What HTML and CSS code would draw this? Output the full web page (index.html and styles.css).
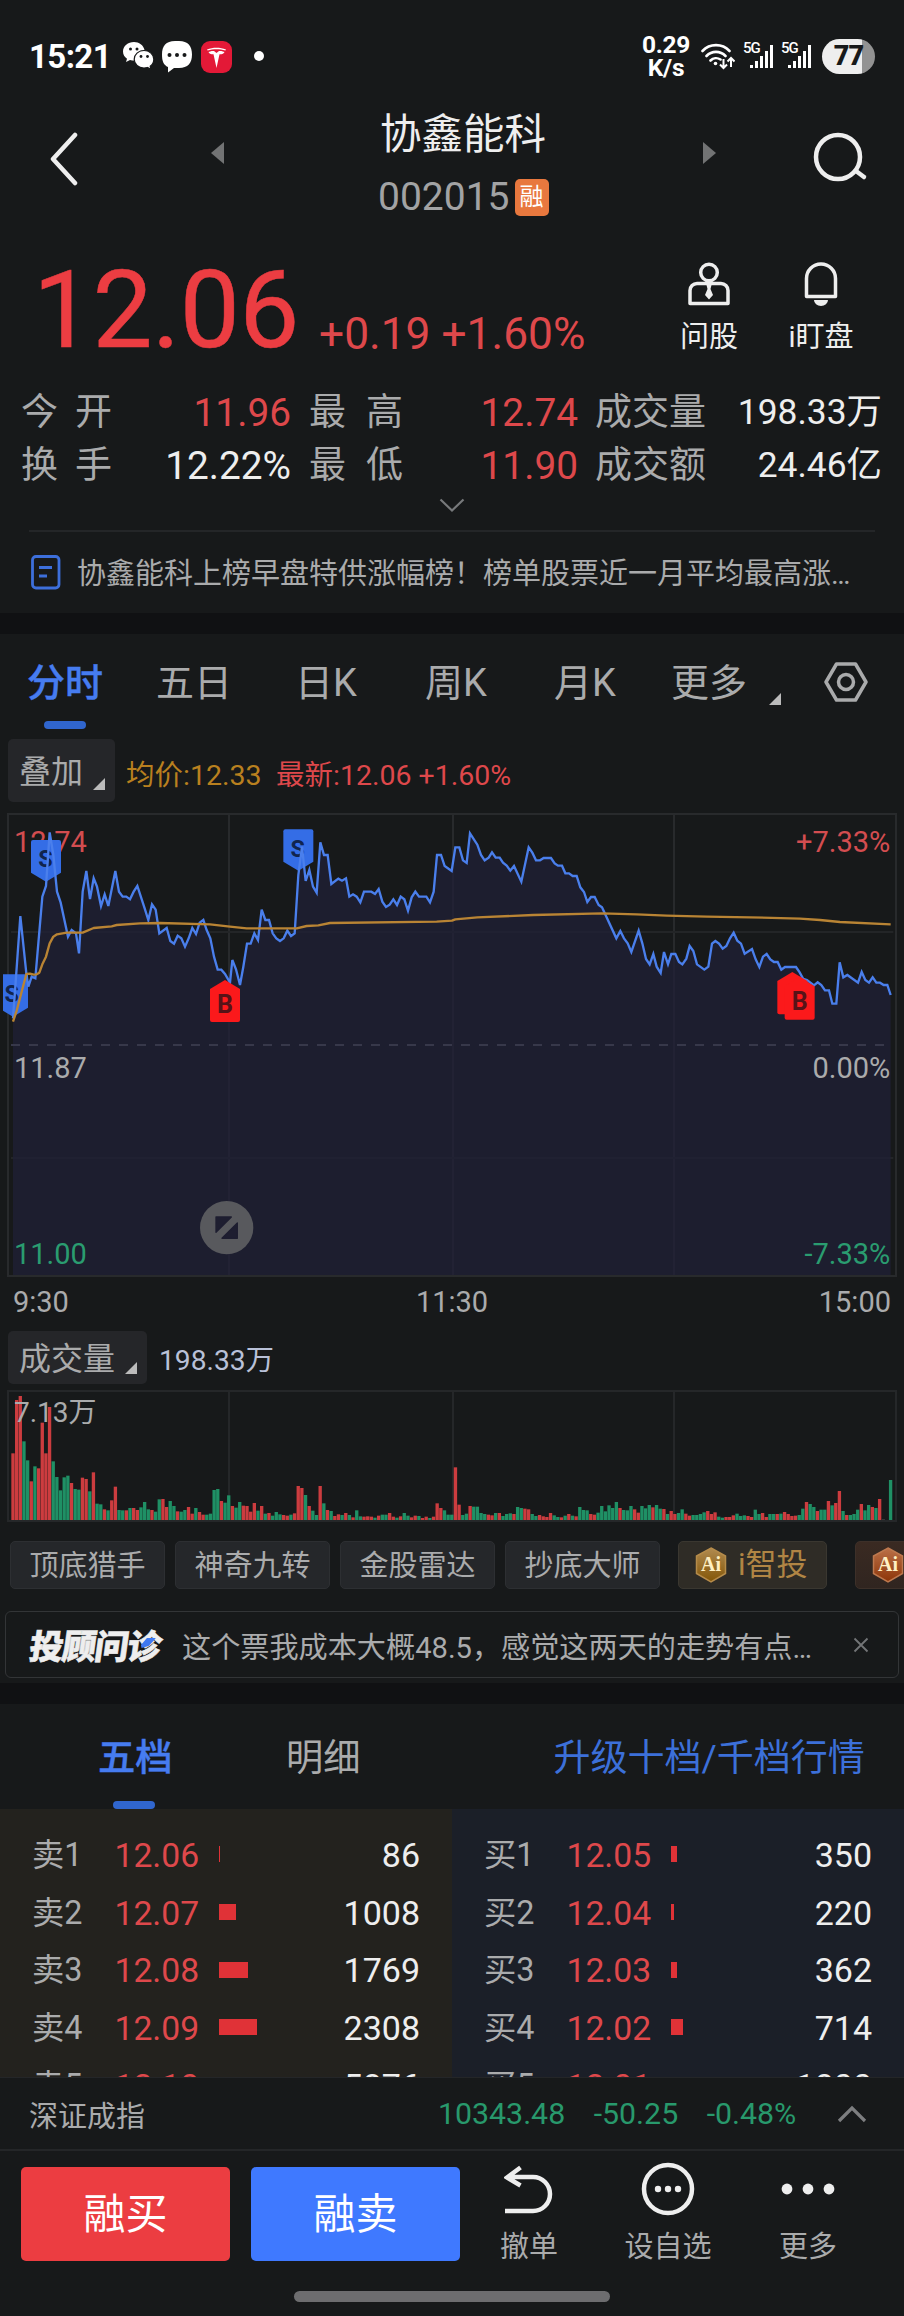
FILE: index.html
```html
<!DOCTYPE html>
<html lang="zh-CN">
<head>
<meta charset="utf-8">
<title>协鑫能科 002015</title>
<link rel="stylesheet" href="styles.css">
</head>
<body>
<div class="status">
  <span class="clock">15:21</span>
  <svg class="wechat" width="32" height="28" viewBox="0 0 32 28"><path fill="#fff" d="M11 0C5 0 0 4 0 9.500c0 3 1.600 5.600 4 7.300L3 20l4-2c1.500.4 3 .6 4 .6 0-6 5-10.600 10.500-10.600C20.500 3 16 0 11 0z"/><path fill="#fff" stroke="#17191a" stroke-width="1.200" d="M21 8.500c-5.600 0-9.800 4-9.800 8.800s4.200 8.700 9.800 8.700c1.200 0 2.300-.2 3.400-.5l3.600 1.800-.8-3c2.200-1.600 3.600-4.200 3.600-7 0-4.800-4.300-8.800-9.800-8.800z"/><g fill="#17191a"><circle cx="7.500" cy="7" r="1.500"/><circle cx="14" cy="7" r="1.500"/><circle cx="18" cy="14.500" r="1.400"/><circle cx="24.500" cy="14.500" r="1.400"/></g></svg>
  <svg class="bubble" width="30" height="32" viewBox="0 0 30 32"><path fill="#fff" d="M13 0h4c9 0 13 5 13 13.500S26 27 17 27h-5l-6 4.500V26C1.500 24 0 20 0 13.500 0 5 4 0 13 0z"/><g fill="#17191a"><circle cx="7.500" cy="14" r="2"/><circle cx="15" cy="14" r="2"/><circle cx="22.500" cy="14" r="2"/></g></svg>
  <svg class="tesla" width="31" height="32" viewBox="0 0 31 32"><rect width="31" height="32" rx="9" fill="#e31937"/><path fill="#fff" d="M6 8.500c6-2.200 13-2.200 19 0l-.6 1.100c-5.600-1.900-12.200-1.900-17.800 0zM7.500 11c2.500-.9 4-.9 5.500-.9l2.500 2 2.500-2c1.500 0 3 0 5.500.9-.6 1.600-2 2.300-5 2.300L15.500 27l-3-13.700c-3 0-4.400-.7-5-2.300z"/></svg>
  <i class="dot"></i>
  <span class="speed">0.29<br>K/s</span>
  <svg class="wifi" width="34" height="28" viewBox="0 0 34 28"><g fill="none" stroke="#fff" stroke-width="2.600" stroke-linecap="round"><path d="M1.500 9a18.500 18.500 0 0 1 27 0M5.500 14a13 13 0 0 1 19 0M9.500 18.500a8 8 0 0 1 10-1"/></g><circle cx="14.500" cy="21.500" r="1.800" fill="#fff"/><path fill="none" stroke="#fff" stroke-width="2" d="M22.500 17v9M19 22.500l3.500 3.500 3.500-3.500M30 25v-9M26.500 19.500L30 16l3.500 3.500"/></svg>
  <span class="signal"><b>5G</b><svg width="24" height="24" viewBox="0 0 24 24" fill="#fff"><rect y="20" width="3" height="3"/><rect x="5" y="16" width="3" height="7"/><rect x="10" y="11" width="3" height="12"/><rect x="15" y="6" width="3" height="17"/><rect x="20" y="0" width="3" height="23"/></svg></span>
  <span class="signal"><b>5G</b><svg width="24" height="24" viewBox="0 0 24 24" fill="#fff"><rect y="20" width="3" height="3"/><rect x="5" y="16" width="3" height="7"/><rect x="10" y="11" width="3" height="12"/><rect x="15" y="6" width="3" height="17"/><rect x="20" y="0" width="3" height="23"/></svg></span>
  <span class="battery">77</span>
</div>

<header class="header">
  <svg class="back" width="30" height="54" viewBox="0 0 30 54"><path d="M27 3L5 27l22 24" fill="none" stroke="#eee" stroke-width="4.500" stroke-linecap="round" stroke-linejoin="round"/></svg>
  <svg class="prev" width="13" height="22" viewBox="0 0 13 22"><path d="M13 0v22L0 11z" fill="#727374"/></svg>
  <div class="name"><h1>协鑫能科</h1><p>002015<span>融</span></p></div>
  <svg class="next" width="13" height="22" viewBox="0 0 13 22"><path d="M0 0v22l13-11z" fill="#727374"/></svg>
  <svg class="search" width="56" height="52" viewBox="0 0 56 52"><g fill="none" stroke="#eee" stroke-width="4.500" stroke-linecap="round"><circle cx="25" cy="25" r="22"/><path d="M43 39l8 6"/></g></svg>
</header>

<section class="quote">
  <b class="price">12.06</b><span class="change">+0.19 +1.60%</span>
  <div class="tool ask"><svg width="42" height="45" viewBox="0 0 42 45"><g fill="none" stroke="#eee" stroke-width="3.500"><circle cx="21" cy="10.500" r="8.300"/><path d="M9 21.500h24a7 7 0 0 1 7 7V41.500H2V28.500a7 7 0 0 1 7-7z" stroke-linejoin="round"/></g><path d="M18.500 23h5l-1 4 2.500 6-4 4.500-4-4.500 2.500-6z" fill="#eee"/></svg><span>问股</span></div>
  <div class="tool"><svg width="36" height="45" viewBox="0 0 36 45"><path d="M3.500 34.500V16.500a14.500 14.500 0 0 1 29 0v18z" fill="none" stroke="#eee" stroke-width="3.500" stroke-linejoin="round"/><path d="M11 38h14a7 6 0 0 1-14 0z" fill="#eee"/></svg><span>i盯盘</span></div>
</section>

<section class="stats">
  <span class="k">今<i></i>开</span><span class="v up">11.96</span><span class="k k2">最<i></i>高</span><span class="v up">12.74</span><span class="k k3">成交量</span><span class="v w">198.33万</span>
  <span class="k">换<i></i>手</span><span class="v">12.22%</span><span class="k k2">最<i></i>低</span><span class="v up">11.90</span><span class="k k3">成交额</span><span class="v w">24.46亿</span>
</section>
<div class="expand"><svg width="26" height="15" viewBox="0 0 26 15"><path d="M1.500 1.500L13 12.500l11.500-11" fill="none" stroke="#77797b" stroke-width="2.200"/></svg></div>

<section class="news">
  <svg width="30" height="35" viewBox="0 0 30 35"><g fill="none" stroke="#3d6fdb" stroke-width="2.800"><rect x="1.500" y="1.500" width="26.500" height="31.500" rx="3.500"/><path d="M8 12.500h13M8 21h8"/></g></svg>
  <span>协鑫能科上榜早盘特供涨幅榜！榜单股票近一月平均最高涨…</span>
</section>
<div class="band"></div>

<nav class="tabs">
  <a class="on">分时</a><a>五日</a><a>日K</a><a>周K</a><a>月K</a><a class="more">更多<svg width="12" height="12" viewBox="0 0 12 12"><path d="M12 0v12H0z" fill="#bbb"/></svg></a>
  <svg class="gear" width="44" height="40" viewBox="0 0 44 40"><g fill="none" stroke="#aaabac" stroke-width="3.500" stroke-linejoin="round"><path d="M12.500 2h19L42 20 31.500 38h-19L2 20z"/><circle cx="22" cy="20" r="7.500"/></g></svg>
</nav>

<div class="overlay">
  <span class="pick">叠加<svg width="12" height="12" viewBox="0 0 12 12"><path d="M12 0v12H0z" fill="#bbb"/></svg></span>
  <span class="avg">均价:12.33</span><span class="last">最新:12.06 +1.60%</span>
</div>

<svg class="chart" width="904" height="475" viewBox="0 18 2712 1425">
  <g fill="none" stroke="#282a2c" stroke-width="6"><rect x="24" y="42" width="2664" height="1386"/><path d="M687 42V1428M1359 42V1428M2022 42V1428"/><path d="M33 396H2680M33 1074H2680" stroke="#232527"/></g>
  <path id="area" fill="#202038" fill-opacity=".72"/>
  <path d="M33 735H2660" stroke="#37384a" stroke-width="6" stroke-dasharray="27 27"/>
  <g class="axis">
    <text class="red" x="42" y="155">12.74</text><text class="red end" x="2671" y="155">+7.33%</text>
    <text x="42" y="834">11.87</text><text class="end" x="2671" y="834">0.00%</text>
    <text class="green" x="42" y="1392">11.00</text><text class="green end" x="2671" y="1392">-7.33%</text>
  </g>
  <g fill="#346de6"><path d="M99 120h78q6 0 6 6v92l-45 27-45-27v-92q0-6 6-6z"/><path d="M856 88h78q6 0 6 6v91l-45 27-45-27V94q0-6 6-6z"/><path d="M9 523h75v100l-45 27-30-18z"/></g>
  <g class="mark"><text x="136" y="202">S</text><text x="893" y="170">S</text><text x="35" y="605">S</text></g>
  <path id="line" fill="none" stroke="#4a7fec" stroke-width="7"/>
  <path fill="none" stroke="#b98434" stroke-width="7" stroke-linejoin="round" d="M39 665L50 632L79 522L90 521L101 524L110 523L118 518L127 493L138 470L149 430L160 410L171 403L200 398H248L281 384L335 379L350 375L420 370L480 369L630 373L690 380L740 385H890L920 378L955 376L990 369L1310 365L1356 362L1366 358L1432 352L1600 345L1806 340L1910 343L2000 347L2120 350L2250 352L2400 356L2460 360L2520 366L2672 373"/>
  <g fill="#fb191b"><path d="M675 540l45 27v93q0 6-6 6h-78q-6 0-6-6v-93z"/><path d="M2377 516l45 27v94q0 6-6 6h-78q-6 0-6-6v-94z"/><path d="M2399 532l45 27v94q0 6-6 6h-78q-6 0-6-6v-94z"/></g>
  <g class="mark b"><text x="675" y="638">B</text><text x="2399" y="630">B</text></g>
  <circle cx="680" cy="1283" r="80" fill="#58595d"/><path d="M648 1251h46l-46 46zM712 1315h-46l46-46z" fill="#1e1e30" stroke="#1e1e30" stroke-width="4" stroke-linejoin="round"/>
</svg>
<div class="times"><span>9:30</span><span>11:30</span><span>15:00</span></div>

<div class="volhead">
  <span class="pick">成交量<svg width="12" height="12" viewBox="0 0 12 12"><path d="M12 0v12H0z" fill="#bbb"/></svg></span><span class="vol">198.33万</span>
</div>
<svg class="volume" width="904" height="136" viewBox="0 24 2712 408">
  <g fill="none" stroke="#252729" stroke-width="6"><rect x="24" y="33" width="2664" height="390"/><path d="M687 33V423M1359 33V423M2022 33V423"/></g>
  <g id="bars"></g>
  <g class="axis"><text class="peak" x="42" y="126">7.13万</text></g>
</svg>

<div class="chips">
  <span>顶底猎手</span><span>神奇九转</span><span>金股雷达</span><span>抄底大师</span>
  <span class="ai"><svg width="32" height="36" viewBox="0 0 32 36"><defs><linearGradient id="gold" x2="0" y2="1"><stop stop-color="#b08a50"/><stop offset="1" stop-color="#835607"/></linearGradient></defs><path d="M16 1l14.500 8v17.500L16 35 1.500 26.500V9z" fill="url(#gold)" stroke="#b58b4a" stroke-width="1.500"/><text x="16" y="24">Ai</text></svg>i智投</span>
  <span class="ai next-ai"><svg width="32" height="36" viewBox="0 0 32 36"><defs><linearGradient id="rust" x2="0" y2="1"><stop stop-color="#ba7048"/><stop offset="1" stop-color="#8d3508"/></linearGradient></defs><path d="M16 1l14.500 8v17.500L16 35 1.500 26.500V9z" fill="url(#rust)" stroke="#bd784e" stroke-width="1.500"/><text x="16" y="24">Ai</text></svg></span>
</div>

<div class="advisor">
  <b>投顾问诊<svg width="14" height="10" viewBox="0 0 14 10"><path d="M5 0h9L8 8l-7 2-1-3z" fill="#3d78f2"/></svg></b>
  <span>这个票我成本大概48.5，感觉这两天的走势有点…</span>
  <svg width="16" height="16" viewBox="0 0 16 16"><path d="M1.500 1.500l13 13M14.500 1.500l-13 13" stroke="#737577" stroke-width="1.800"/></svg>
</div>
<div class="band band2"></div>

<nav class="booktabs"><a class="on">五档</a><a>明细</a><a class="up10">升级十档/千档行情</a></nav>
<section class="book">
  <div class="side sell">
    <p><span>卖1</span><b>12.06</b><i style="width:1px"></i><em>86</em></p>
    <p><span>卖2</span><b>12.07</b><i style="width:17px"></i><em>1008</em></p>
    <p><span>卖3</span><b>12.08</b><i style="width:29px"></i><em>1769</em></p>
    <p><span>卖4</span><b>12.09</b><i style="width:38px"></i><em>2308</em></p>
    <p><span>卖5</span><b>12.10</b><i style="width:95px"></i><em>5876</em></p>
  </div>
  <div class="side buy">
    <p><span>买1</span><b>12.05</b><i style="width:6px"></i><em>350</em></p>
    <p><span>买2</span><b>12.04</b><i style="width:3px"></i><em>220</em></p>
    <p><span>买3</span><b>12.03</b><i style="width:6px"></i><em>362</em></p>
    <p><span>买4</span><b>12.02</b><i style="width:12px"></i><em>714</em></p>
    <p><span>买5</span><b>12.01</b><i style="width:29px"></i><em>1800</em></p>
  </div>
</section>

<div class="index">
  <span class="iname">深证成指</span><span>10343.48</span><span>-50.25</span><span>-0.48%</span>
  <svg width="30" height="18" viewBox="0 0 30 18"><path d="M2 16L15 3l13 13" fill="none" stroke="#7d7e80" stroke-width="3.200"/></svg>
</div>
<footer class="actions">
  <button class="buybtn">融买</button><button class="sellbtn">融卖</button>
  <div class="act a1"><svg width="50" height="48" viewBox="0 0 50 48"><path d="M16.500 2.500L3 12.500l13.500 8M4 12H29a17 17 0 0 1 0 34H1" fill="none" stroke="#eee" stroke-width="4.500"/></svg><span>撤单</span></div>
  <div class="act a2"><svg width="54" height="54" viewBox="0 0 54 54"><circle cx="27" cy="27" r="24" fill="none" stroke="#eee" stroke-width="4.500"/><g fill="#eee"><circle cx="17" cy="27" r="3.200"/><circle cx="27" cy="27" r="3.200"/><circle cx="37" cy="27" r="3.200"/></g></svg><span>设自选</span></div>
  <div class="act a3"><svg width="54" height="54" viewBox="0 0 54 54"><g fill="#eee"><circle cx="6" cy="27" r="5.400"/><circle cx="27" cy="27" r="5.400"/><circle cx="48" cy="27" r="5.400"/></g></svg><span>更多</span></div>
</footer>
<div class="home"></div>
<script src="chart.js"></script>
</body>
</html>
```

FILE: styles.css
```css
* { box-sizing: border-box; }
body { margin: 0; width: 904px; height: 2316px; overflow: hidden; background: #17191a; color: #aaabac; font-family: Roboto, "Noto Sans CJK SC", sans-serif; }
h1, p { margin: 0; font-weight: 400; }
svg { display: block; flex: none; }
span, a, b { white-space: nowrap; }

.status { height: 92px; padding: 20px 29px 0 29px; display: flex; align-items: center; color: #fff; }
.clock { width: 94px; font-size: 33px; font-weight: 700; letter-spacing: -.6px; }
.bubble { margin-left: 7px; margin-top: 2px; }
.tesla { margin-left: 9px; margin-top: 1px; }
.dot { width: 10px; height: 10px; margin-left: 22px; border-radius: 50%; background: #fff; }
.speed { margin-left: auto; width: 50px; font-size: 24.500px; line-height: 23px; font-weight: 700; text-align: center; letter-spacing: -.3px; }
.wifi { margin-left: 10px; }
.signal { display: flex; width: 31px; height: 26px; margin-left: 8px; align-items: flex-end; position: relative; padding-left: 7px; }
.signal + .signal { margin-left: 7px; }
.signal b { position: absolute; left: 0; top: -2px; font-size: 15px; line-height: 15px; font-weight: 500; letter-spacing: -1px; }
.battery { margin-left: 10px; width: 53px; height: 35px; border-radius: 18px; background: linear-gradient(90deg, #eee 40px, #929292 40px); color: #17191a; font-size: 27px; line-height: 35px; font-weight: 900; text-align: center; letter-spacing: -1px; }

.header { height: 132px; display: flex; align-items: flex-start; }
.back { margin: 40px 0 0 48px; }
.prev { margin: 50px 0 0 133px; }
.name { width: 240px; margin: 17px 0 0 119px; text-align: center; }
.name h1 { height: 52px; font-size: 41.500px; line-height: 52px; color: #eee; }
.name p { display: flex; height: 72px; align-items: center; padding-left: 35px; font-size: 39px; font-weight: 400; color: #a2a3a4; }
.name p span { width: 34px; height: 37px; margin-left: 5px; border-radius: 5px; background: #e8783e; color: #fff; font-size: 24px; line-height: 36px; text-align: center; }
.next { margin: 50px 0 0 120px; }
.search { margin: 40px 0 0 97px; }

.quote { height: 160px; display: flex; padding-left: 33px; align-items: flex-start; }
.price { width: 286px; font-size: 107px; line-height: 126px; font-weight: 400; letter-spacing: -.6px; color: #ec3d42; margin-top: 24px; -webkit-text-stroke: .5px #ec3d42; }
.change { width: 354px; font-size: 44.300px; line-height: 50px; color: #de484b; margin-top: 85px; }
.tool { width: 72px; margin-top: 38px; display: flex; flex-direction: column; align-items: center; color: #eee; font-size: 29px; line-height: 40px; }
.tool span { margin-top: 10px; }
.ask { margin-right: 40px; }

.stats { height: 108px; padding: 2px 0 0 21px; display: grid; grid-template-columns: 130px 140px 131px 156px 125px 179px; grid-template-rows: 53px 53px; font-size: 37px; line-height: 53px; }
.k { white-space: nowrap; }
.k i { display: inline-block; width: 17px; }
.k2 { padding-left: 18px; }
.k2 i { width: 20px; }
.k3 { padding-left: 17px; }
.v { text-align: right; font-size: 38.800px; color: #eee; }
.w { font-size: 35.400px; }
.up { color: #de484b; }
.expand { height: 38px; padding: 6px 0 0 439px; }

.news { height: 83px; margin: 0 29px; border-top: 2px solid #242628; display: flex; align-items: center; font-size: 29px; gap: 16px; padding-left: 2px; }
.news span { margin-top: -4px; }
.band { height: 21px; background: #101113; }

.tabs { height: 105px; display: grid; grid-template-columns: 129px 139px 130px 129px 117px 153px 1fr; padding-left: 27px; font-size: 38px; line-height: 99px; }
.on { position: relative; color: #467cf0; font-weight: 500; -webkit-text-stroke: .4px #467cf0; }
.on::after { content: ""; position: absolute; left: 17px; top: 87px; width: 42px; height: 8px; border-radius: 4px; background: #3066ce; }
.more { display: flex; }
.more svg { margin: 59px 0 0 22px; }
.gear { margin-top: 28px; }

.overlay { height: 67px; display: flex; padding-left: 8px; align-items: flex-start; font-size: 28.500px; line-height: 73px; }
.pick { display: flex; height: 63px; padding: 0 10px 0 11px; border-radius: 5px; background: #252629; font-size: 32px; line-height: 66px; }
.pick svg { margin: 39px 0 0 10px; }
.avg { margin-left: 11px; width: 150px; color: #b9801f; }
.last { color: #de484b; }

.axis text { font-size: 87px; fill: #aaabac; }
.axis .peak { font-size: 84px; }
.axis .red { fill: #d34d50; }
.axis .green { fill: #2a9c70; }
.axis .end { text-anchor: end; }
.mark text { font-size: 70px; font-weight: 700; fill: #10244e; text-anchor: middle; }
.mark.b text { fill: #561318; font-size: 75px; }
.times { height: 50px; padding: 1px 13px 0 13px; display: grid; grid-template-columns: 1fr 1fr 1fr; font-size: 29px; line-height: 40px; }
.times span:nth-child(2) { text-align: center; }
.times span:nth-child(3) { text-align: right; }
.volhead { height: 57px; padding-left: 8px; display: flex; font-size: 28.200px; line-height: 59px; color: #b9c1d8; }
.volhead .pick { height: 53px; color: #aaabac; line-height: 57px; }
.volhead .pick svg { margin-top: 31px; }
.vol { margin-left: 12px; }

.chips { height: 73px; padding: 17px 0 0 10px; display: flex; gap: 10px; overflow: hidden; }
.chips > span { flex: none; width: 155px; height: 48px; border-radius: 5px; background: #25272a; border: 1px solid #2d2f32; font-size: 29px; line-height: 48px; text-align: center; }
.chips .ai { width: 149px; margin-left: 8px; display: flex; gap: 11px; align-items: center; padding-left: 16px; background: #2f2c26; border-color: #3a3730; color: #b08544; font-size: 31px; }
.chips .next-ai { margin-left: 18px; background: linear-gradient(180deg, #3a2a22, #302520); border-color: #3d3029; }
.ai text { font-family: "Liberation Serif", serif; font-weight: 700; font-size: 20px; fill: #fff0c4; text-anchor: middle; }
.advisor { height: 67px; margin: 14px 5px 0; border: 1.500px solid #333537; border-radius: 6px; display: flex; align-items: center; font-size: 29.150px; }
.advisor b { position: relative; width: 155px; padding-left: 24px; color: #eee; font-size: 34px; font-weight: 900; letter-spacing: -1.300px; transform: skewX(-8deg); -webkit-text-stroke: .6px #eee; }
.advisor b svg { position: absolute; left: 135px; top: 18px; }
.advisor span { margin-left: 21px; width: 671px; }
.band2 { margin-top: 5px; }

.booktabs { height: 105px; display: flex; font-size: 37.300px; line-height: 109px; }
.booktabs a.on { width: 76px; margin-left: 98px; }
.booktabs .on::after { left: 15px; top: 97px; }
.booktabs a { margin-left: 112px; }
.booktabs .up10 { margin-left: 193px; font-size: 37px; color: #3c70d9; }
.book { height: 268px; display: grid; grid-template-columns: 452px 452px; overflow: hidden; }
.side { padding: 17.500px 32px 0; background: #23221e; height: 330px; }
.buy { background: #1b1f28; }
.side p { display: flex; height: 57.700px; align-items: center; line-height: 57px; }
.side span { width: 82.500px; font-size: 32.300px; }
.side b { width: 104.500px; font-size: 33.700px; font-weight: 400; color: #de484b; }
.side i { height: 16px; background: #e03237; margin-top: -2px; }
.side em { margin-left: auto; font-size: 34px; font-style: normal; color: #eee; }

.index { height: 74px; border-top: 1px solid #242628; border-bottom: 2px solid #242628; display: flex; align-items: center; padding-left: 29px; font-size: 30.300px; color: #28996c; }
.index span + span { margin-left: 28.500px; }
.index .iname { width: 409px; font-size: 29px; color: #aaabac; }
.index .iname + span { margin-left: 0; }
.index svg { margin-left: auto; margin-right: 37px; }
.actions { height: 140px; display: flex; padding: 16px 0 0 21px; }
.actions button { width: 209px; height: 94px; border: 0; border-radius: 5px; color: #fff; font: 42px/96px Roboto, "Noto Sans CJK SC", sans-serif; padding: 0; }
.buybtn { background: #ec3d41; margin-right: 21px; }
.sellbtn { background: #3f79ff; }
.act { width: 90px; display: flex; flex-direction: column; align-items: center; font-size: 29px; line-height: 40px; margin-top: -5px; }
.act svg { height: 54px; }
.act span { margin-top: 11px; }
.a1 { margin-left: 24px; }
.a2 { margin-left: 49px; }
.a3 { margin-left: 50px; }
.home { width: 316px; height: 11px; margin: 0 auto; border-radius: 6px; background: #6d6d6f; }
```

FILE: chart.js
```js
// Intraday price points, x and y in thirds of a pixel.
const price = `39 655 46 560 61 348 79 520 85 560 95 530 106 535 127 290 138 258 149 97 160 165 171 275 182 308 204 410 215 390 228 400 237 460 248 275 259 213 270 297 281 235 291 260 303 318 314 283 325 318 346 213 357 275 368 290 379 290 390 298 401 275 412 258 434 325 445 360 456 313 467 329 478 400 500 384 511 423 522 431 533 407 544 415 555 440 566 415 577 384 588 402 599 368 610 360 620 390 631 415 642 470 653 509 664 509 675 522 690 548 697 480 708 508 720 555 730 500 741 431 752 431 763 400 774 420 785 329 796 360 807 360 818 400 829 415 840 423 851 415 862 392 873 408 884 400 895 225 906 140 917 243 928 210 939 260 950 278 961 127 972 165 983 165 994 252 1015 236 1026 242 1038 235 1048 290 1059 283 1070 290 1081 307 1092 275 1114 275 1125 282 1136 267 1147 305 1158 321 1169 314 1180 298 1191 315 1202 290 1213 298 1224 332 1235 292 1246 275 1257 290 1279 290 1290 307 1301 275 1311 165 1323 165 1334 198 1355 213
1366 142 1378 142 1389 181 1400 189 1410 100 1432 134 1443 165 1454 181 1466 173 1476 157 1487 173 1499 173 1509 188 1520 197 1531 212 1542 198 1564 245 1586 142 1597 158 1608 181 1620 181 1631 174 1653 174 1664 190 1674 197 1686 197 1696 220 1707 220 1718 228 1730 228 1741 262 1752 276 1762 306 1773 291 1784 291 1796 315 1806 322 1849 415 1861 393 1872 415 1883 430 1894 456 1916 392 1927 430 1938 477 1949 493 1960 462 1970 500 1982 519 1992 456 2004 493 2014 462 2026 462 2037 486 2047 493 2059 476 2069 438 2080 453 2091 493 2113 509 2125 500 2136 431 2146 423 2157 431 2168 446 2179 438 2190 415 2201 398 2212 422 2223 431 2234 461 2256 447 2267 478 2278 501 2289 470 2300 462 2311 478 2322 486 2333 486 2344 509 2355 501 2388 501 2399 517 2410 537 2421 540 2442 556 2453 547 2464 555 2475 571 2487 571 2497 611 2509 611 2519 487 2530 532 2542 525 2563 540 2574 548 2585 516 2596 540 2607 548 2618 532 2629 548 2640 548 2651 555 2662 555 2672 585`;
const path = 'M' + price.split(/\s+/).join(' ');
document.getElementById('line').setAttribute('d', path);
document.getElementById('area').setAttribute('d', path + ' V1425 H39 Z');

// One bar per minute: top edge and direction (r rising, g falling).
const tops = `220r 60r 48r 184g 241g 304r 259g 265r 128r 220r 81r 244g 291g 331g 292g 287g 309r 327g 329g 293r 297r 334g 277r 371g 373g 388r 391g 361r 320r 390g 391g 391r 384g 384r 390r 382g 366g 388g 390r 395g 358g 357r 381r 363g 378g 394r 395g 390g 381r 401r 384g 396r 404r 404g 401g 330g 327g 363r 368g 346g 378r 383g 366g 377r 378r 395r 369r 392g 378r 401g 399r 407g 396g 403g 405r 407r 404g 400r 318r 324r 345g 378r 392g 405g 318r 370g 390r 393g 408r 403r 405g 399r 405g 412r 391g 409g 410r 409r 410r 413g 407r 404g 404g 399r 410r 413g 409r 399g 407g 412r 407r 408g 414r 410r 414g 410r 370r 384r 391g 404g 404g
262r 374r 405g 401g 378r 380g 380g 399g 402g 404r 406r 399g 399r 408g 402g 400g 402r 381g 384g 386r 388r 402g 408g 405r 409r 411r 399r 406g 411g 412r 407g 402r 407g 409r 381g 390g 391g 402r 404r 398g 378g 394g 376g 384g 366g 384r 390g 391g 378g 388r 398r 378g 385g 375g 382r 375g 386g 387r 402g 393r 402r 399g 388g 401r 407r 405g 405g 402g 397g 393r 402r 397r 410g 413g 411r 411r 406r 401g 408g 406g 408r 411r 389g 402g 399r 411r 402g 402g 402r 401g 396r 402r 408r 407r 405g 386g 366r 372g 381g 393r 389g 389g 363r 376g 369r 333r 393g 405r 405g 402g 389g 372r 391g 375g 381r 384g 357r 417n 420n 300g`.split(/\s+/);
const colors = { r: '#cc3c3f', g: '#1f9065', n: '#36383a' };
document.getElementById('bars').innerHTML = tops.map((t, i) => {
  const y = parseInt(t, 10);
  return `<rect x="${(34 + i * 10.97).toFixed(1)}" y="${y}" width="10" height="${420 - y}" fill="${colors[t.slice(-1)]}"/>`;
}).join('');
```
